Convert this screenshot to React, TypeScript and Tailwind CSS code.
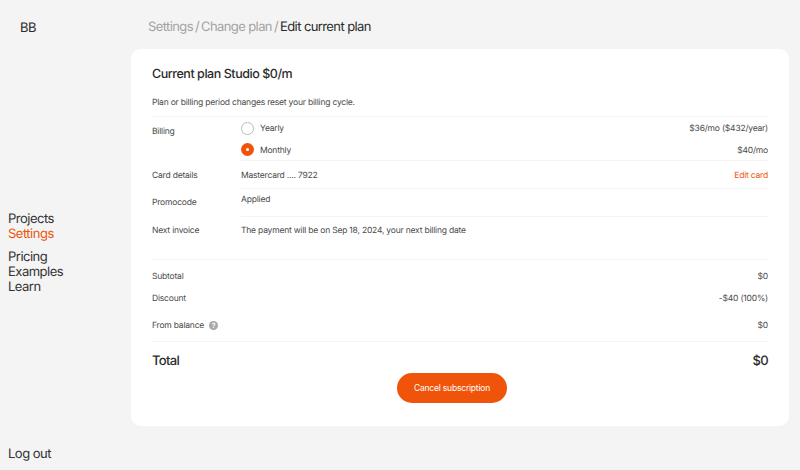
import React from "react";

function Divider({ inset = false }: { inset?: boolean }) {
  return <div className={`h-px bg-[#f3f3f3] ${inset ? "ml-[89px]" : ""}`} />;
}

function Row({ label, value, right, h, className = "" }: { label: React.ReactNode; value?: React.ReactNode; right?: React.ReactNode; h: string; className?: string }) {
  return (
    <div className={`flex items-center ${h} ${className}`}>
      <div className="w-[89px] shrink-0">{label}</div>
      <div className="flex-1">{value}</div>
      <div>{right}</div>
    </div>
  );
}

export default function App() {
  return (
    <div className="flex h-[470px] w-[800px] overflow-hidden bg-[#f4f4f4] text-[#2b2b2b] font-['Inter',sans-serif] [text-rendering:geometricPrecision]">
      <aside className="flex w-[131px] shrink-0 flex-col">
        <div className="pl-[20px] pt-[20px] text-[13px] leading-[16px] tracking-[-0.5px]">BB</div>
        <nav className="mt-[176px] pl-[8px] text-[13px] leading-[15px] tracking-[-0.5px] text-[#333]">
          <div>Projects</div>
          <div className="text-[#f0540a]">Settings</div>
          <div className="mt-[8px]">Pricing</div>
          <div>Examples</div>
          <div>Learn</div>
        </nav>
        <div className="mt-auto pb-[8px] pl-[8px] text-[13px] leading-[16px] tracking-[-0.5px] text-[#333]">Log out</div>
      </aside>
      <main className="flex flex-1 flex-col pr-[11px]">
        <div className="flex h-[49px] items-center pl-[17px] pt-[5px] text-[13px] leading-[16px] tracking-[-0.6px]">
          <span className="text-[#a3a3a3]">Settings</span>
          <span className="mx-[2px] text-[#a3a3a3]">/</span>
          <span className="text-[#a3a3a3]">Change plan</span>
          <span className="mx-[2px] text-[#a3a3a3]">/</span>
          <span className="text-[#2b2b2b]">Edit current plan</span>
        </div>
        <section className="h-[377px] rounded-[10px] bg-white pl-[21px] pr-[21px] text-[8.5px] leading-[12px] tracking-[-0.2px] text-[#4a4a4a]">
          <h1 className="pt-[18px] text-[12.5px] leading-[16px] font-medium tracking-[-0.45px] text-[#2b2b2b]">Current plan Studio $0/m</h1>
          <p className="mt-[14px] mb-[7px] leading-[12px]">Plan or billing period changes reset your billing cycle.</p>
          <Divider />
          <div className="flex">
            <div className="w-[89px] pt-[9px]">Billing</div>
            <div className="flex-1">
              <div className="flex h-[22px] items-center justify-between">
                <div className="flex items-center gap-[6px]">
                  <span className="h-[13px] w-[13px] rounded-full border border-[#bbb]" />
                  <span className="pt-[2px]">Yearly</span>
                </div>
                <span className="pt-[2px]">$36/mo ($432/year)</span>
              </div>
              <div className="flex h-[21px] items-center justify-between">
                <div className="flex items-center gap-[6px]">
                  <span className="flex h-[13px] w-[13px] items-center justify-center rounded-full bg-[#f0540a]">
                    <span className="h-[3px] w-[3px] rounded-full bg-white" />
                  </span>
                  <span className="pt-[2px]">Monthly</span>
                </div>
                <span className="pt-[2px]">$40/mo</span>
              </div>
            </div>
          </div>
          <Divider inset />
          <Row h="h-[27px]" className="pt-[2px]" label="Card details" value="Mastercard .... 7922" right={<span className="text-[#f0540a]">Edit card</span>} />
          <Divider inset />
          <Row h="h-[27px]" label="Promocode" value={<span className="relative -top-[3px]">Applied</span>} />
          <Divider inset />
          <Row h="h-[28px]" label="Next invoice" value="The payment will be on Sep 18, 2024, your next billing date" />
          <div className="h-[14px]" />
          <Divider />
          <Row h="h-[33px]" label="Subtotal" right="$0" />
          <Row h="h-[9px]" className="pt-[2px]" label="Discount" right="-$40 (100%)" />
          <Row
            h="h-[39px]"
            className="pt-[9px]"
            label={
              <span className="flex w-[80px] items-center gap-[5px] whitespace-nowrap">
                From balance
                <span className="-mt-[2px] flex h-[9px] w-[9px] items-center justify-center rounded-full bg-[#a8a8a8] text-[7px] leading-[9px] font-semibold tracking-normal text-white">?</span>
              </span>
            }
            right="$0"
          />
          <Divider />
          <div className="flex h-[31px] items-center justify-between pt-[7px] text-[13px] font-medium tracking-[-0.65px] text-[#2b2b2b]">
            <span>Total</span>
            <span>$0</span>
          </div>
          <div className="flex justify-center pr-[16px]">
            <button className="h-[30px] w-[110px] rounded-full bg-[#f0540a] text-[8.5px] tracking-[-0.2px] text-[#fff]">Cancel subscription</button>
          </div>
        </section>
      </main>
    </div>
  );
}
